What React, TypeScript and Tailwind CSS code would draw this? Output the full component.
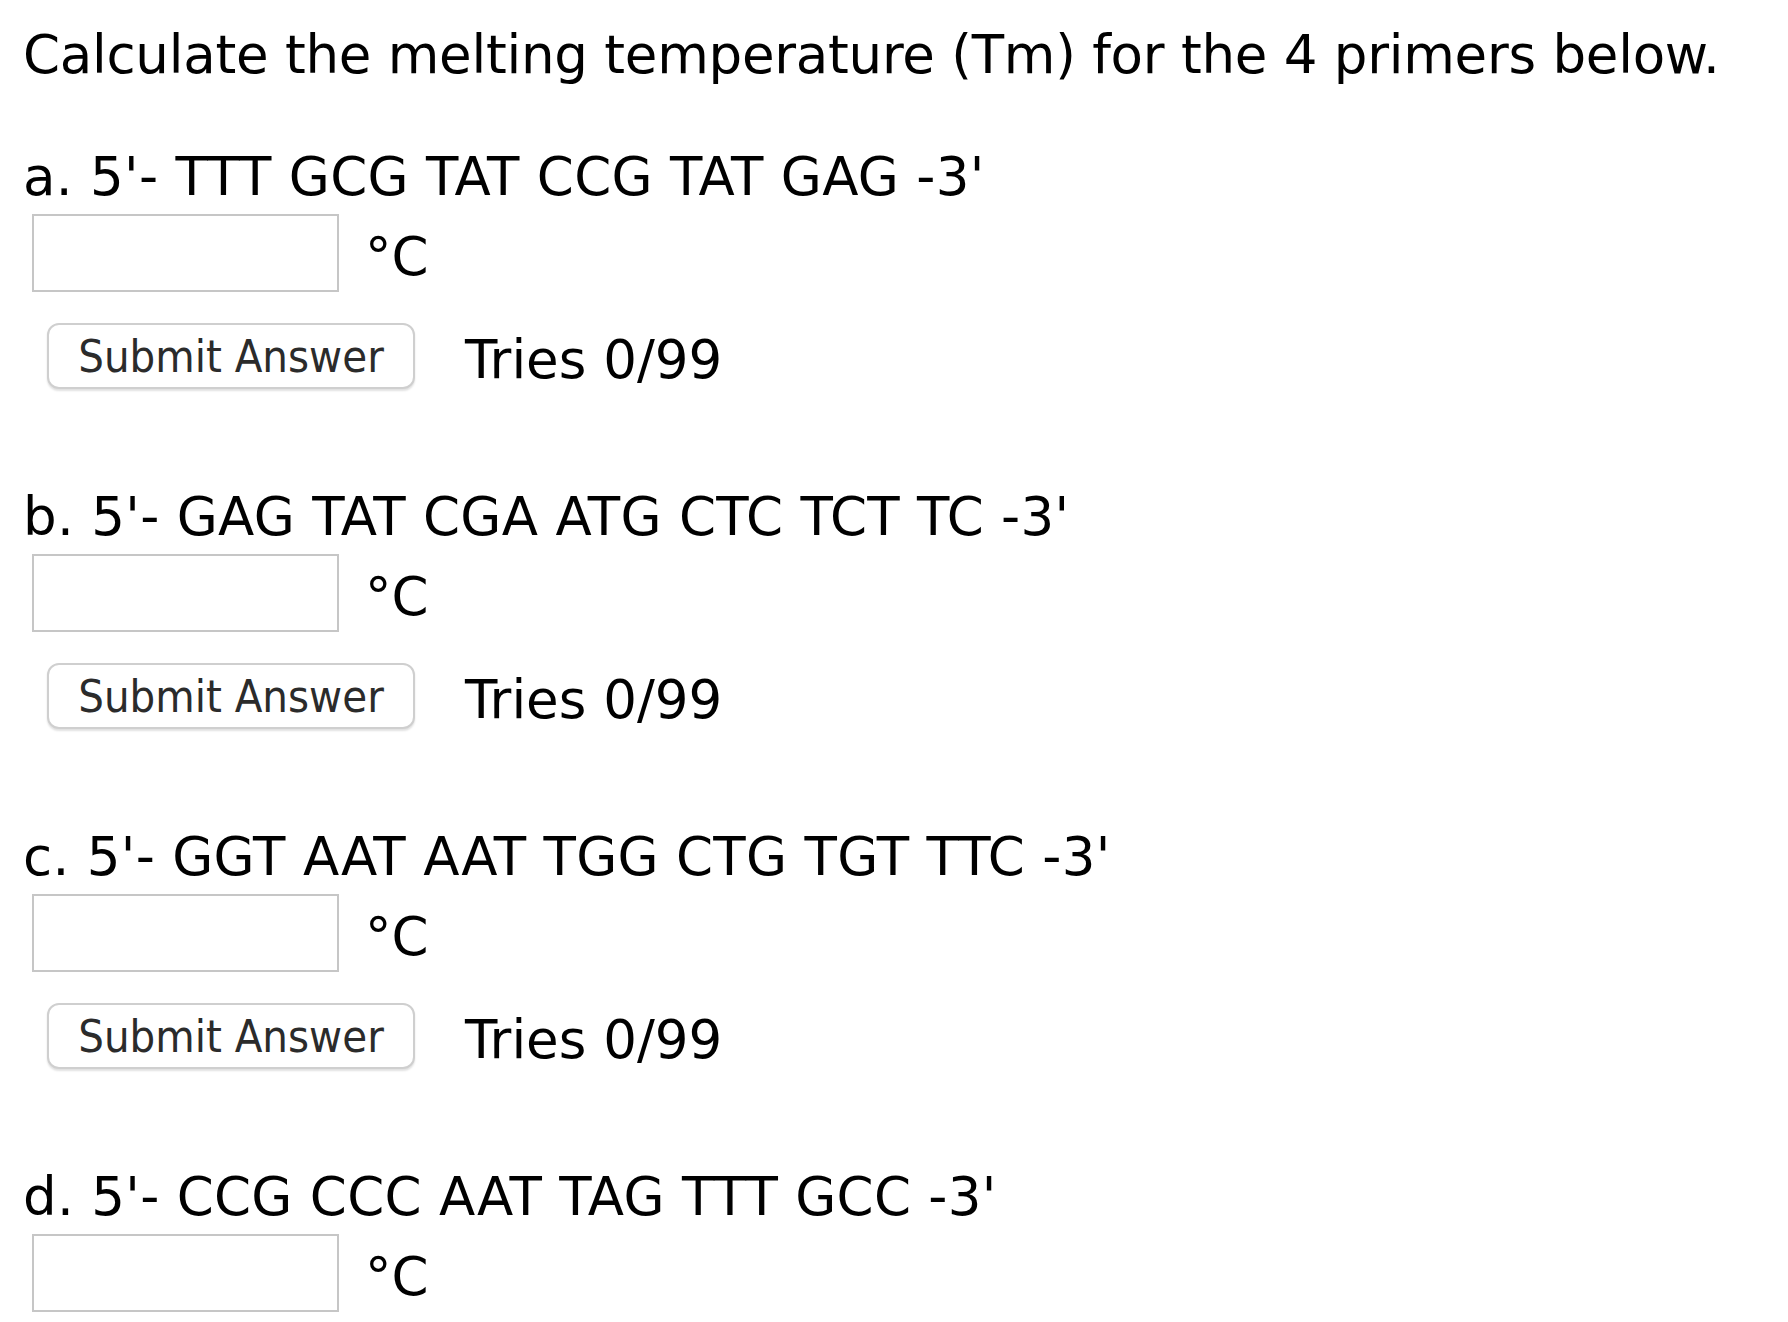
import React from 'react';

const primers = [
  { key: 'a', seq: "5'- TTT GCG TAT CCG TAT GAG -3'", submit: true },
  { key: 'b', seq: "5'- GAG TAT CGA ATG CTC TCT TC -3'", submit: true },
  { key: 'c', seq: "5'- GGT AAT AAT TGG CTG TGT TTC -3'", submit: true },
  { key: 'd', seq: "5'- CCG CCC AAT TAG TTT GCC -3'", submit: false },
];

const bodyFont = { fontFamily: '"DejaVu Sans", Verdana, sans-serif' };
const buttonFont = { fontFamily: '"DejaVu Sans Condensed", "DejaVu Sans", sans-serif' };

function Primer({ label, seq, submit }: { label: string; seq: string; submit: boolean }) {
  return (
    <div className="flex flex-col">
      <div className="text-[53px] leading-[64px] tracking-[0.3px] text-black whitespace-nowrap">
        {label}. {seq}
      </div>
      <div className="mt-[5px] flex items-center h-[78px]">
        <input
          type="text"
          className="ml-[9px] w-[307px] h-[78px] border-2 border-[#c6c6c6] bg-white outline-none"
        />
        <span className="ml-[26px] mt-2 text-[53px] leading-[64px] text-black">°C</span>
      </div>
      {submit && (
        <div className="mt-[31px] flex items-center h-[66px]">
          <button
            type="button"
            className="ml-[24px] w-[368px] h-[66px] rounded-[12px] border-2 border-[#cfcfcf] bg-white text-[45px] leading-none text-[#2b2b2b] shadow-[0_2px_2px_rgba(0,0,0,0.12)]"
            style={buttonFont}
          >
            Submit Answer
          </button>
          <span className="ml-[50px] mt-[8px] text-[53px] leading-[64px] text-black">Tries 0/99</span>
        </div>
      )}
    </div>
  );
}

export default function App() {
  return (
    <div className="min-h-screen bg-white pl-[23px] pt-[23px]" style={bodyFont}>
      <div className="text-[53px] leading-[64px] tracking-[-0.25px] text-black whitespace-nowrap">
        Calculate the melting temperature (Tm) for the 4 primers below.
      </div>
      <div className="mt-[58px] flex flex-col gap-[96px]">
        {primers.map((p) => (
          <Primer key={p.key} label={p.key} seq={p.seq} submit={p.submit} />
        ))}
      </div>
    </div>
  );
}
